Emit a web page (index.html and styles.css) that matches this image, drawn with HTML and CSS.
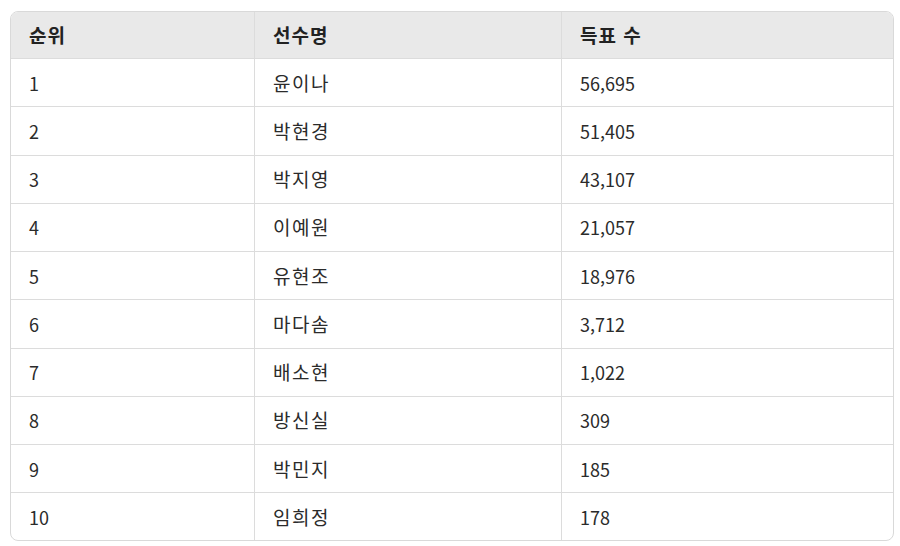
FILE: index.html
```
<!DOCTYPE html>
<html lang="ko">
<head>
<meta charset="utf-8">
<link rel="stylesheet" href="styles.css">
</head>
<body>
<div class="wrap">
<table class="rank">
<thead>
<tr><th class="c1">순위</th><th class="c2">선수명</th><th class="c3">득표 수</th></tr>
</thead>
<tbody>
<tr><td>1</td><td class="name">윤이나</td><td>56,695</td></tr>
<tr><td>2</td><td class="name">박현경</td><td>51,405</td></tr>
<tr><td>3</td><td class="name">박지영</td><td>43,107</td></tr>
<tr><td>4</td><td class="name">이예원</td><td>21,057</td></tr>
<tr><td>5</td><td class="name">유현조</td><td>18,976</td></tr>
<tr><td>6</td><td class="name">마다솜</td><td>3,712</td></tr>
<tr><td>7</td><td class="name">배소현</td><td>1,022</td></tr>
<tr><td>8</td><td class="name">방신실</td><td>309</td></tr>
<tr><td>9</td><td class="name">박민지</td><td>185</td></tr>
<tr class="last"><td>10</td><td class="name">임희정</td><td>178</td></tr>
</tbody>
</table>
</div>
</body>
</html>
```
FILE: styles.css
```
html, body {
  margin: 0;
  padding: 0;
  background: #ffffff;
}
body {
  font-family: "Noto Sans CJK KR", "Noto Sans", sans-serif;
  color: #2b2b2b;
}
.wrap {
  padding: 11px 6px 0 10px;
}
.rank {
  width: 884px;
  border-collapse: separate;
  border-spacing: 0;
  border: 1px solid #d9d9d9;
  border-radius: 8px;
  overflow: hidden;
  table-layout: fixed;
  font-size: 18px;
}
.rank th, .rank td {
  text-align: left;
  padding: 0 0 0 18px;
  border-right: 1px solid #dcdcdc;
  border-bottom: 1px solid #dcdcdc;
  box-sizing: border-box;
  line-height: 22px;
}
.rank th:last-child, .rank td:last-child {
  border-right: none;
}
.rank tbody tr:last-child td {
  border-bottom: none;
}
.rank th {
  background: #e9e9e9;
  font-weight: 700;
  height: 47px;
  color: #222;
  font-size: 19px;
  letter-spacing: 1px;
}
.rank td {
  height: 48.25px;
}
.rank tr.last td {
  height: 47px;
}
.rank td.name {
  font-size: 19px;
  letter-spacing: 1.5px;
}
.c1 { width: 244px; }
.c2 { width: 307px; }
.c3 { width: auto; }
```
